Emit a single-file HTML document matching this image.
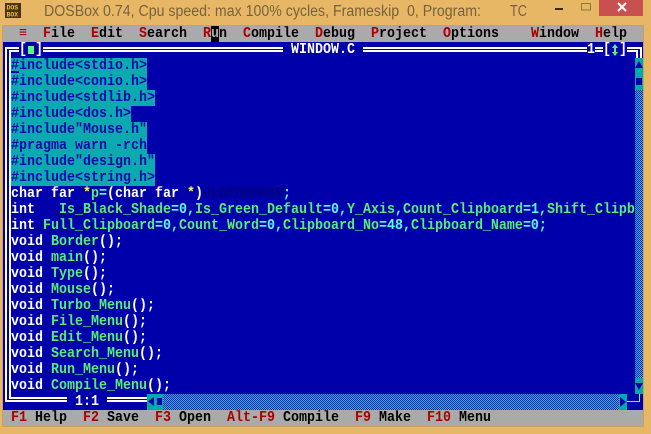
<!DOCTYPE html>
<html><head><meta charset="utf-8"><style>
html,body{margin:0;padding:0;background:#e8b766;}
#w{position:relative;width:651px;height:434px;overflow:hidden;background:#e8b766;font-family:"Liberation Mono",monospace;font-weight:bold;font-size:13.33px;line-height:16px;}
.a{position:absolute;}
.r{position:absolute;left:3px;width:632px;height:16px;white-space:pre;overflow:hidden;color:#fff;transform:translateY(1px) scaleY(1.1);}
.s{position:absolute;height:16px;white-space:pre;color:#fff;transform:translateY(1px) scaleY(1.1);top:42px;}
.k{color:#aa0000}.n{color:#000}.g{color:#55ee77}.c{color:#55ffff}.h{color:#0a0aa8}.y{color:#ffff55}
.l{position:absolute;background:#fff;}
.d{position:absolute;background-image:conic-gradient(#0033aa 25%,#4f9fe4 0 50%,#0033aa 0 75%,#4f9fe4 0);background-size:2px 2px;}
.t{position:absolute;background:#00aaaa;}
.b{position:absolute;left:11px;height:16px;background:#0caab0;}
</style></head><body><div id="w">
<svg class="a" style="left:0;top:0" width="651" height="26" font-family="'Liberation Sans',sans-serif" font-weight="normal" font-size="15.5" fill="#75633f">
<rect x="5" y="3" width="16" height="15" fill="#4a3410"/>
<text x="6.5" y="9.5" font-size="6.5" font-weight="bold" fill="#e8c040" font-family="'Liberation Mono',monospace">DOS</text>
<text x="6.5" y="16.5" font-size="6.5" font-weight="bold" fill="#e8c040" font-family="'Liberation Mono',monospace">BOX</text>
<text x="44" y="16" textLength="437" lengthAdjust="spacingAndGlyphs" xml:space="preserve">DOSBox 0.74, Cpu speed: max 100% cycles, Frameskip  0, Program:</text>
<text x="510" y="16" textLength="17" lengthAdjust="spacingAndGlyphs">TC</text>
<rect x="555" y="8" width="8" height="2" fill="#3a2a10"/>
<rect x="581.5" y="3.5" width="9" height="6.5" fill="none" stroke="#8a7650"/>
<rect x="599" y="0" width="44" height="16" fill="#c85050"/>
<path d="M618 3L626 11M626 3L618 11" stroke="#fff" stroke-width="2" fill="none"/>
</svg>
<div class="a" style="left:2px;top:25px;width:642px;height:402px;background:#c9a05c"></div>
<div class="a" style="left:3px;top:26px;width:640px;height:16px;background:#aaaaaa"></div>
<div class="a" style="left:3px;top:42px;width:640px;height:368px;background:#0000aa"></div>
<div class="a" style="left:3px;top:410px;width:640px;height:16px;background:#aaaaaa"></div>

<div class="a" style="left:211px;top:26px;width:8px;height:16px;background:#000"></div>
<div class="r n" style="top:26px;width:640px">  <span class="k">≡</span>  <span class="k">F</span>ile  <span class="k">E</span>dit  <span class="k">S</span>earch  <span class="k">R</span><span style="color:#aaa">u</span>n  <span class="k">C</span>ompile  <span class="k">D</span>ebug  <span class="k">P</span>roject  <span class="k">O</span>ptions    <span class="k">W</span>indow  <span class="k">H</span>elp</div>

<!-- frame -->
<div class="l" style="left:5px;top:47px;width:2px;height:355px"></div>
<div class="l" style="left:9px;top:50px;width:2px;height:348px"></div>
<div class="l" style="left:5px;top:47px;width:14px;height:2px"></div>
<div class="l" style="left:9px;top:50px;width:10px;height:2px"></div>
<div class="l" style="left:43px;top:47px;width:240px;height:2px"></div>
<div class="l" style="left:43px;top:50px;width:240px;height:2px"></div>
<div class="l" style="left:363px;top:47px;width:224px;height:2px"></div>
<div class="l" style="left:363px;top:50px;width:224px;height:2px"></div>
<div class="l" style="left:595px;top:47px;width:8px;height:2px"></div>
<div class="l" style="left:595px;top:50px;width:8px;height:2px"></div>
<div class="l" style="left:627px;top:47px;width:15px;height:2px"></div>
<div class="l" style="left:627px;top:50px;width:11px;height:2px"></div>
<div class="l" style="left:640px;top:47px;width:2px;height:11px"></div>
<div class="l" style="left:636px;top:50px;width:2px;height:8px"></div>
<div class="l" style="left:5px;top:400px;width:62px;height:2px"></div>
<div class="l" style="left:9px;top:397px;width:58px;height:2px"></div>
<div class="l" style="left:107px;top:400px;width:40px;height:2px"></div>
<div class="l" style="left:107px;top:397px;width:40px;height:2px"></div>
<span class="s" style="left:19px">[</span><span class="s" style="left:35px">]</span>
<div class="a" style="left:28px;top:46px;width:6px;height:8px;background:#55ff77"></div>
<span class="s" style="left:291px">WINDOW.C</span>
<span class="s" style="left:587px">1</span><span class="s" style="left:603px">[</span><span class="s" style="left:619px">]</span>
<svg class="a" style="left:611px;top:42px" width="8" height="16"><path d="M4 2L7 6H5V10H7L4 14L1 10H3V6H1Z" fill="#55ee88"/></svg>

<!-- code -->
<div class="b" style="top:58px;width:136px"></div>
<div class="b" style="top:74px;width:136px"></div>
<div class="b" style="top:90px;width:144px"></div>
<div class="b" style="top:106px;width:120px"></div>
<div class="b" style="top:122px;width:136px"></div>
<div class="b" style="top:138px;width:136px"></div>
<div class="b" style="top:154px;width:144px"></div>
<div class="b" style="top:170px;width:144px"></div>
<div class="r" style="top:58px"> <span class="h">#include&lt;stdio.h&gt;</span></div>
<div class="r" style="top:74px"> <span class="h">#include&lt;conio.h&gt;</span></div>
<div class="r" style="top:90px"> <span class="h">#include&lt;stdlib.h&gt;</span></div>
<div class="r" style="top:106px"> <span class="h">#include&lt;dos.h&gt;</span></div>
<div class="r" style="top:122px"> <span class="h">#include"Mouse.h"</span></div>
<div class="r" style="top:138px"> <span class="h">#pragma warn -rch</span></div>
<div class="r" style="top:154px"> <span class="h">#include"design.h"</span></div>
<div class="r" style="top:170px"> <span class="h">#include&lt;string.h&gt;</span></div>
<div class="a" style="left:11px;top:71px;width:8px;height:2px;background:#0000aa"></div>
<div class="r" style="top:186px"> char far <span class="y">*</span><span class="g">p</span><span class="c">=</span>(char far <span class="y">*</span>)<span style="color:#000078">0xb8000000</span><span class="c">;</span></div>
<div class="r" style="top:202px"> int   <span class="g">Is_Black_Shade</span><span class="c">=0,</span><span class="g">Is_Green_Default</span><span class="c">=0,</span><span class="g">Y_Axis</span><span class="c">,</span><span class="g">Count_Clipboard</span><span class="c">=1,</span><span class="g">Shift_Clipb</span></div>
<div class="r" style="top:218px"> int <span class="g">Full_Clipboard</span><span class="c">=0,</span><span class="g">Count_Word</span><span class="c">=0,</span><span class="g">Clipboard_No</span><span class="c">=48,</span><span class="g">Clipboard_Name</span><span class="c">=0;</span></div>
<div class="r" style="top:234px"> void <span class="g">Border</span>();</div>
<div class="r" style="top:250px"> void <span class="g">main</span>();</div>
<div class="r" style="top:266px"> void <span class="g">Type</span>();</div>
<div class="r" style="top:282px"> void <span class="g">Mouse</span>();</div>
<div class="r" style="top:298px"> void <span class="g">Turbo_Menu</span>();</div>
<div class="r" style="top:314px"> void <span class="g">File_Menu</span>();</div>
<div class="r" style="top:330px"> void <span class="g">Edit_Menu</span>();</div>
<div class="r" style="top:346px"> void <span class="g">Search_Menu</span>();</div>
<div class="r" style="top:362px"> void <span class="g">Run_Menu</span>();</div>
<div class="r" style="top:378px"> void <span class="g">Compile_Menu</span>();</div>
<div class="r" style="top:394px;width:200px">         1:1</div>

<!-- vertical scrollbar -->
<div class="d" style="left:635px;top:90px;width:8px;height:288px"></div>
<div class="t" style="left:635px;top:58px;width:8px;height:32px"></div>
<svg class="a" style="left:635px;top:58px" width="8" height="32"><path d="M4 3L8 10H0Z" fill="#0000aa"/><rect x="1" y="20" width="6" height="7" fill="#0000aa"/></svg>
<div class="t" style="left:635px;top:378px;width:8px;height:16px"></div>
<svg class="a" style="left:635px;top:378px" width="8" height="16"><path d="M0 5H8L4 12Z" fill="#0000aa"/></svg>

<!-- horizontal scrollbar -->
<div class="d" style="left:163px;top:394px;width:456px;height:16px"></div>
<div class="t" style="left:147px;top:394px;width:16px;height:16px"></div>
<svg class="a" style="left:147px;top:394px" width="16" height="16"><path d="M7 3V12L1 7.5Z" fill="#0000aa"/><rect x="10" y="4" width="5" height="7" fill="#0000aa"/></svg>
<div class="t" style="left:619px;top:394px;width:8px;height:16px"></div>
<svg class="a" style="left:619px;top:394px" width="8" height="16"><path d="M1 3V13L7 8Z" fill="#0000aa"/></svg>
<div class="a" style="left:627px;top:401px;width:13px;height:1px;background:#66ff88"></div>
<div class="a" style="left:639px;top:394px;width:1px;height:8px;background:#66ff88"></div>

<!-- status -->
<div class="r n" style="top:410px;width:640px"> <span class="k">F1</span> Help  <span class="k">F2</span> Save  <span class="k">F3</span> Open  <span class="k">Alt-F9</span> Compile  <span class="k">F9</span> Make  <span class="k">F10</span> Menu</div>
</div></body></html>
